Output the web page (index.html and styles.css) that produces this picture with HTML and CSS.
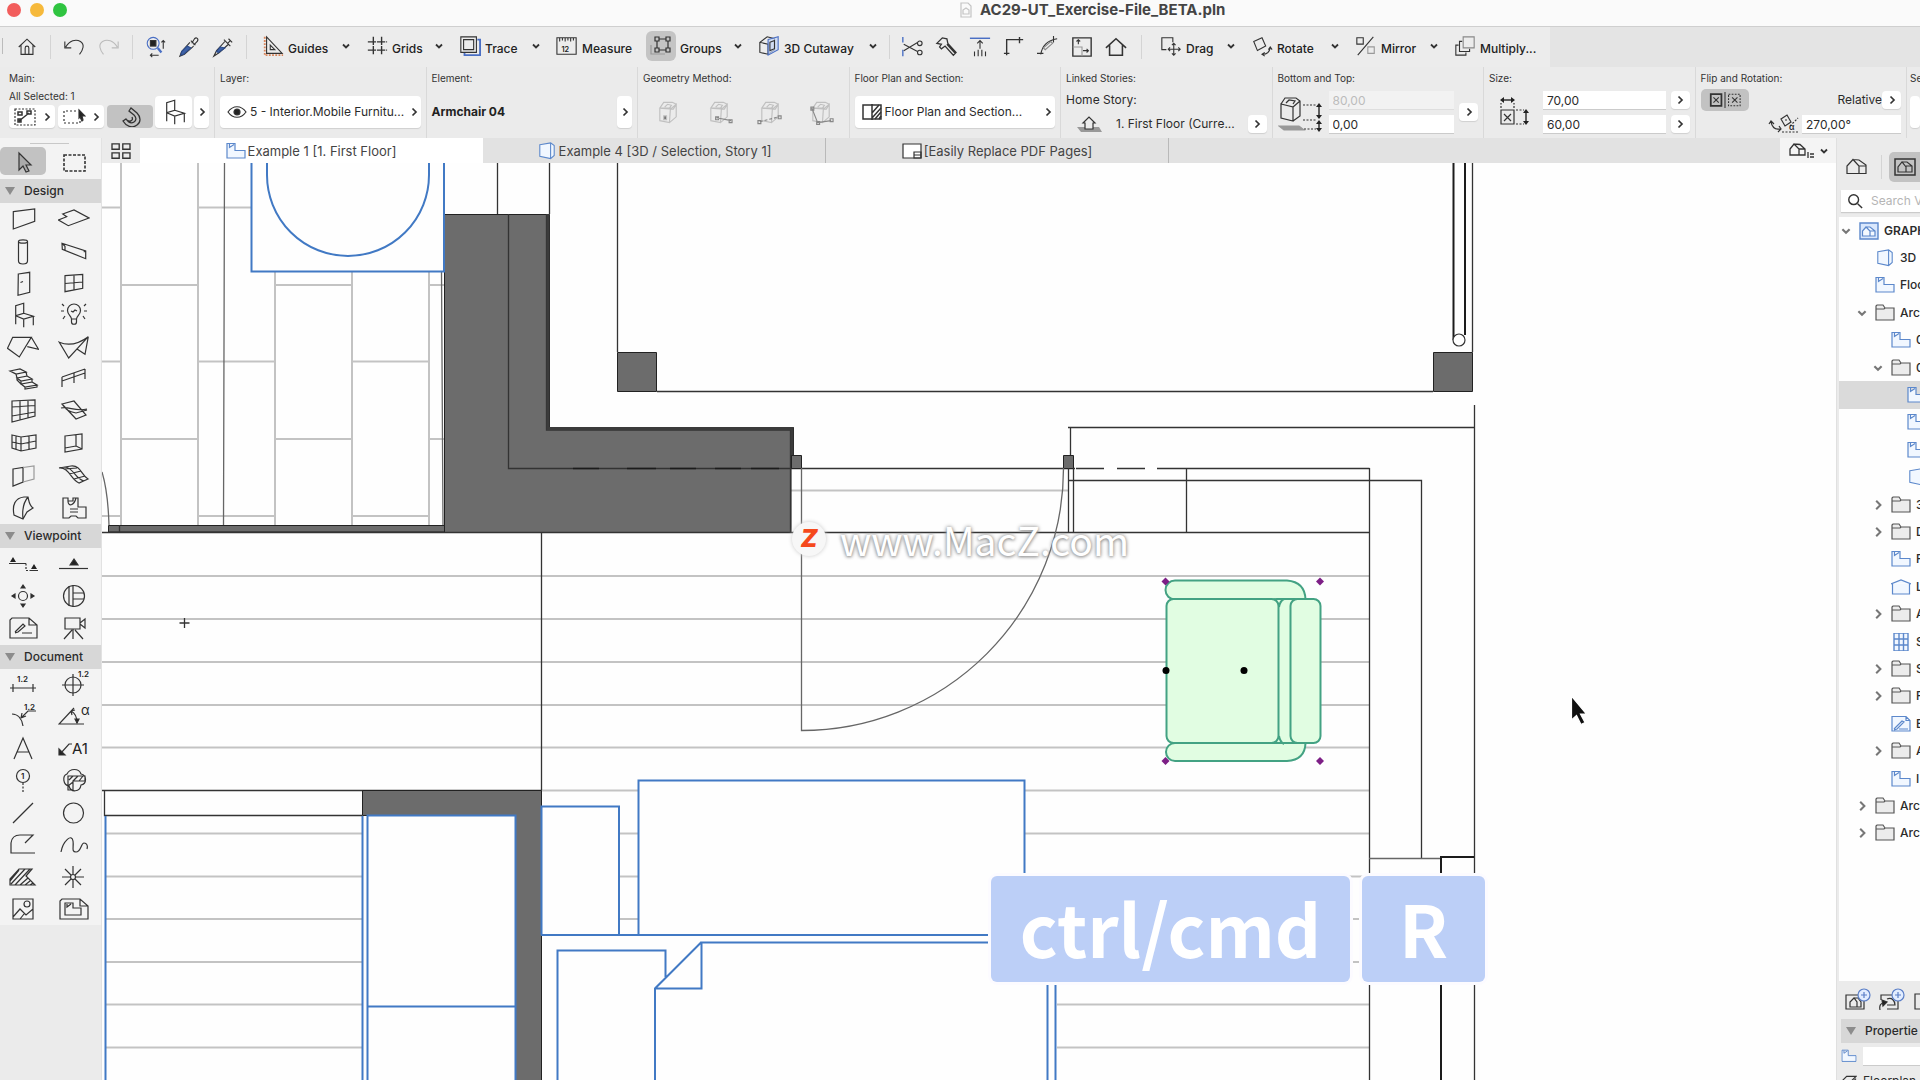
FILE: index.html
```html
<!DOCTYPE html>
<html lang="en">
<head>
<meta charset="utf-8">
<title>AC29-UT_Exercise-File_BETA.pln</title>
<link rel="stylesheet" href="styles.css">
</head>
<body>
<svg class="defs" aria-hidden="true">
  <symbol id="down" viewBox="0 0 10 10"><path d="M2 3.500l3 3 3-3" stroke-width="1.800"/></symbol>
  <symbol id="right" viewBox="0 0 10 10"><path d="M3.500 1.500L7 5 3.500 8.500" stroke-width="1.700"/></symbol>
  <symbol id="chair" viewBox="0 0 32 32"><path d="M8.700 25.300V6.700l8-2.400v10l-8 2.400zM16.700 14.300l9.600 3-9.600 2.700-8-3.300M16.700 20v8.300M26.300 17.300v9"/></symbol>
  <symbol id="plan" viewBox="0 0 20 18"><path d="M1 1.500h8v7h10v7.500H1zM3.500 2v3.500L8 2.500"/></symbol>
  <symbol id="box3d" viewBox="0 0 20 20"><path d="M2 3l12-2 4 3v11l-4 3.500L2 16zM14 1v17.500"/></symbol>
  <symbol id="folder" viewBox="0 0 20 18"><path d="M1 16V2l1-1h6l2 3h9v12zM1 5h8l1-1" /></symbol>
  <symbol id="house" viewBox="0 0 24 20"><path d="M2 16.500V9l6-6.500 6 6.500v7.500zM8 2.500l6 .5 7 5v8.500h-7M14 9h7M14 16v-5"/></symbol>
  <symbol id="home" viewBox="0 0 24 24"><path d="M3 12L12 3.500 21 12M5.500 10v10h13V10M10 20v-7a2 2 0 0 1 4 0v7"/></symbol>
  <symbol id="cube" viewBox="0 0 28 28"><path d="M5 10l4-6h9l4 2-3 5zM5 10v13l10 2 1-15zM16 11l6-5v13l-7 6M10 9l3-3 4 1-2 3"/></symbol>
</svg>

<header class="titlebar">
  <span class="light red"></span><span class="light amber"></span><span class="light green"></span>
  <h1><svg viewBox="0 0 12 16"><path d="M1 1h7l3 3v11H1zM3 12V8l3-2 3 2v4z" stroke="#c4c4c4"/></svg>AC29-UT_Exercise-File_BETA.pln</h1>
</header>

<nav class="toolbar" aria-label="Commands">
  <span class="grip"></span>
  <button aria-label="Home"><svg viewBox="0 0 24 24"><use href="#home"/></svg></button>
  <span class="sep"></span>
  <button aria-label="Undo"><svg viewBox="0 0 24 24"><path d="M2 6v7h7M3 12C7 5 14 3 19 6s3 9-1 14"/></svg></button>
  <button aria-label="Redo"><svg class="dim" viewBox="0 0 24 24"><path d="M22 6v7h-7M21 12C17 5 10 3 5 6s-3 9 1 14"/></svg></button>
  <span class="sep"></span>
  <button aria-label="Find and select"><svg viewBox="0 0 24 24"><circle cx="10" cy="8" r="6.500" stroke="#4a6fc4"/><rect x="7" y="5" width="6" height="6" fill="#222"/><path d="M15 13l4 5" stroke="#4a6fc4" stroke-width="2.500"/><path d="M21 14V5M19 7l2-2 2 2M16 21H7M9 19l-2 2 2 2"/></svg></button>
  <button aria-label="Pick up parameters"><svg viewBox="0 0 24 24"><path d="M14 5l5 5M15 8l3-5c2-2 5 0 3 3l-4 4M13 7l-9 10-2 5 5-2 10-9"/><path d="M10 11l4 2-8 7-3 1 1-4z" fill="#3f63a8" stroke="#2c4c8c"/></svg></button>
  <button aria-label="Inject parameters"><svg viewBox="0 0 24 24"><path d="M13 4l7 7M18 3l4 4M17 8l3-3M14 6L5 16l-3 6 6-4L18 9"/><path d="M9 12l5 1-7 5-2-1z" fill="#3f63a8" stroke="#2c4c8c"/></svg></button>
  <span class="sep"></span>
  <button class="tool"><svg viewBox="0 0 24 24"><path d="M3 2v20h20" stroke="#d9855a" stroke-width="2" stroke-dasharray="2 1.500"/><path d="M5 2v18h17zM9 11v5h5z"/></svg>Guides<svg class="chev"><use href="#down"/></svg></button>
  <button class="tool"><svg viewBox="0 0 24 24"><path d="M8 2v20M17 2v20M2 7.500h21M2 16.500h21" stroke-width="1.500" stroke-dasharray="9 1"/></svg>Grids<svg class="chev"><use href="#down"/></svg></button>
  <button class="tool"><svg viewBox="0 0 24 24"><path d="M6 6v16h17V5h-3" stroke="#4a6fc4" stroke-width="2"/><path d="M2 2h17v17H2zM5 5h11v11H5z" fill="#ececec"/></svg>Trace<svg class="chev"><use href="#down"/></svg></button>
  <button class="tool"><svg viewBox="0 0 24 24"><path d="M1 21V3h21v18zM4 3v4M7 3v3M10 3v4M13 3v3M16 3v4M19 3v3"/><text x="6" y="18" class="mini">12</text></svg>Measure</button>
  <button class="tool groups"><svg class="pressed" viewBox="0 0 30 30"><path d="M5 14v9h14" stroke="#999"/><path d="M11 8h11v11H11z"/><path d="M9 6h4v4H9zM20 6h4v4h-4zM9 17h4v4H9zM20 17h4v4h-4z" fill="#c4c4c4"/></svg>Groups<svg class="chev"><use href="#down"/></svg></button>
  <button class="tool"><svg viewBox="0 0 24 24"><path d="M2 8l8-6 8 2v12l-7 5-9-2zM2 8l9 2v11" /><path d="M11 5l11-3v14l-11 6z" fill="#c4d6f7" fill-opacity=".7" stroke="#4a6fc4"/><path d="M13 8l5-2v9l-5 2z"/></svg>3D Cutaway<svg class="chev"><use href="#down"/></svg></button>
  <span class="sep"></span>
  <button aria-label="Trim"><svg viewBox="0 0 24 24"><path d="M2 1v6M2 15v7" stroke="#4a6fc4" stroke-width="1.500"/><path d="M3 9l15 8M3 16l15-9"/><circle cx="20.500" cy="8" r="2.500"/><circle cx="20.500" cy="18" r="2.500"/></svg></button>
  <button aria-label="Split"><svg viewBox="0 0 24 24"><path d="M2 8l6-6 5 1 1 5 9 10-3 3-9-10-4 3-2-2 2-3zM13 9l9 10" stroke-width="1.400"/></svg></button>
  <button aria-label="Adjust"><svg viewBox="0 0 24 24"><path d="M1 2.500h22" stroke="#4a6fc4" stroke-width="1.600"/><path d="M12 14V5M9 8l3-3 3 3M6 22v-5M10 22v-7M14 22v-7M18 22v-5"/></svg></button>
  <button aria-label="Intersect"><svg viewBox="0 0 24 24"><path d="M4 21V4h18M18 1v7M1 19h6" stroke-width="1.500"/></svg></button>
  <button aria-label="Fillet"><svg viewBox="0 0 24 24"><path d="M4 20C6 10 11 5 22 3M18 0v7M0 19h7"/><path d="M7 13l8-7 2 2-8 7z" stroke="#888"/></svg></button>
  <button aria-label="Resize"><svg viewBox="0 0 24 24"><path d="M2 2h20v20H2z" stroke-width="1.500"/><path d="M8 9V4M6 6l2-2 2 2M13 16h6M17 14l2 2-2 2"/><path d="M2 12h10v10" stroke="#999"/></svg></button>
  <button aria-label="Elevation"><svg viewBox="0 0 24 24"><path d="M1 13L12 3l11 10M5 10v11h14V10" stroke-width="1.700"/></svg></button>
  <span class="sep"></span>
  <button class="tool"><svg viewBox="0 0 24 24"><path d="M7 16H2V3h12v5M15 9v13M9 15.500h13M13 11l2-2 2 2M13 20l2 2 2-2M11 13.500l-2 2 2 2M20 13.500l2 2-2 2"/></svg>Drag<svg class="chev"><use href="#down"/></svg></button>
  <button class="tool"><svg viewBox="0 0 24 24"><path d="M3 7l9-4 4 9-9 5zM13 21c4 0 7-2 8-7M19 16l2-3 2 3M15 19l-3 2 3 2"/></svg>Rotate<svg class="chev"><use href="#down"/></svg></button>
  <button class="tool"><svg viewBox="0 0 24 24"><path d="M2 3h7v7H2zM3 22L20 2"/><path d="M14 13h7v7h-7z" stroke="#999"/></svg>Mirror<svg class="chev"><use href="#down"/></svg></button>
  <button class="tool"><svg viewBox="0 0 24 24"><path d="M5 11H2v11h11v-3M9 7H6v11h11v-3"/><path d="M10 2h12v12H10z" stroke="#888"/></svg>Multiply...</button>
</nav>

<section class="infobar" aria-label="Info box">
  <div class="cell main">
    <h2>Main:</h2>
    <div class="picks">
      <div class="stack">
        <p class="small">All Selected: 1</p>
        <div class="row">
          <button class="card pick" aria-label="Selection set"><svg viewBox="0 0 24 20"><path d="M2 2h20v16H2z" stroke-dasharray="2 1.500"/><path d="M6 14l10-8M5 5h4v3H5zM14 4h4v3h-4zM5 12h3v3H5z" stroke-width="1.500"/></svg><svg class="chev"><use href="#right"/></svg></button>
          <button class="card pick" aria-label="Marquee set"><svg viewBox="0 0 24 20"><path d="M14 4H2v12h16v-4" stroke-dasharray="2 2"/><path d="M17 3l6 6h-3l1 4-1 1-2-4-1 1z" fill="#222"/></svg><svg class="chev"><use href="#right"/></svg></button>
          <button class="card pick on" aria-label="Magic"><svg viewBox="0 0 24 20"><path d="M5 14l3-2c2 3 5 5 8 3s2-5 0-7l-5-4 2-3 6 5c4 4 4 9 0 12-5 4-11 1-14-4zM8 12c2 3 8 3 6-2" stroke-width="1.300"/></svg></button>
        </div>
      </div>
      <button class="card chairbtn tall" aria-label="Object settings"><svg class="i32" viewBox="0 0 32 32"><use href="#chair"/></svg></button>
      <button class="card slim tall" aria-label="More"><svg class="chev"><use href="#right"/></svg></button>
    </div>
  </div>
  <div class="cell">
    <h2>Layer:</h2>
    <button class="card wide"><svg viewBox="0 0 20 16"><path d="M1 8c5-7 13-7 18 0-5 7-13 7-18 0z"/><circle cx="10" cy="8" r="3" fill="#222"/></svg>5 - Interior.Mobile Furnitu...<svg class="chev"><use href="#right"/></svg></button>
  </div>
  <div class="cell">
    <h2>Element:</h2>
    <div class="row element"><strong>Armchair 04</strong><button class="card slim tall" aria-label="Choose element"><svg class="chev"><use href="#right"/></svg></button></div>
  </div>
  <div class="cell">
    <h2>Geometry Method:</h2>
    <div class="methods">
      <button aria-label="Method 1"><svg viewBox="0 0 28 28"><use href="#cube"/><rect x="9" y="18" width="3" height="4" fill="#777"/></svg></button>
      <button aria-label="Method 2"><svg viewBox="0 0 28 28"><use href="#cube"/><path d="M11 20l15 3M10 19h3v3h-3zM24 22h3v3h-3z" stroke="#888"/></svg></button>
      <button aria-label="Method 3"><svg viewBox="0 0 28 28"><use href="#cube"/><path d="M3 24l20-5" stroke="#888" stroke-dasharray="3 2"/><path d="M1 23h3v3H1zM22 18h3v3h-3z" stroke="#888"/></svg></button>
      <button aria-label="Method 4"><svg viewBox="0 0 28 28"><use href="#cube"/><path d="M4 10l6 15 14-2M3 9h3v3H3zM9 24h3v3H9zM23 21h3v3h-3z" stroke="#888"/></svg></button>
    </div>
  </div>
  <div class="cell">
    <h2>Floor Plan and Section:</h2>
    <button class="card wide"><svg viewBox="0 0 20 16"><path d="M1 1h18v14H1z" stroke-width="1.500"/><path d="M10 0v16M10 9l7-8M10 14l9-10M13 15l6-7M17 15l2-3" stroke-width="1.500"/></svg>Floor Plan and Section...<svg class="chev"><use href="#right"/></svg></button>
  </div>
  <div class="cell">
    <h2>Linked Stories:</h2>
    <div class="pair">
      <p>Home Story:</p>
      <div class="row story"><svg class="i28" viewBox="0 0 28 20"><path d="M2 13h22l3 5H6z" fill="#999" stroke="none"/><path d="M8 9l6-6 6 6h-2v6h-8V9z" fill="#ececec"/></svg><span>1. First Floor (Curre...</span><button class="card nub" aria-label="Home story"><svg class="chev"><use href="#right"/></svg></button></div>
    </div>
  </div>
  <div class="cell">
    <h2>Bottom and Top:</h2>
    <div class="row dims bt">
      <svg class="i46" viewBox="0 0 46 40"><path d="M3 12l12 3v14L3 26zM3 12l4-6h11l4 3v15l-7 5M15 15l7-6M8 11l3-3 6 1-2 3"/><path d="M1 34h20l5 4H6z" fill="#999" stroke="#999"/><path d="M25 13h14M25 28h14M26 37h12" stroke-dasharray="2 1.500"/><path d="M41 14v12M41 30v7" stroke-width="1.500"/><path d="M41 11l3 4h-6zM41 27l3-4h-6zM41 28l3 4h-6zM41 40l3-4h-6z" fill="#222" stroke="none"/></svg>
      <div class="pair"><input type="text" value="80,00" aria-label="Top" disabled><input type="text" value="0,00" aria-label="Bottom"></div>
      <button class="card nub" aria-label="Anchor"><svg class="chev"><use href="#right"/></svg></button>
    </div>
  </div>
  <div class="cell">
    <h2>Size:</h2>
    <div class="row dims size">
      <svg class="i32" viewBox="0 0 32 32"><path d="M3 14h13v14H3zM6 18l7 7M13 18l-7 7"/><path d="M3 12V7M16 12V7M18 14h8M18 28h8" stroke-dasharray="2 1.500"/><path d="M4 4h11M28 16v10" stroke-width="1.500"/><path d="M2 4l4-3v6zM17 4l-4-3v6zM28 13l3 4h-6zM28 29l3-4h-6z" fill="#222" stroke="none"/></svg>
      <div class="pair"><input type="text" value="70,00" aria-label="Width"><input type="text" value="60,00" aria-label="Depth"></div>
      <div class="pair"><button class="card nub" aria-label="Width options"><svg class="chev"><use href="#right"/></svg></button><button class="card nub" aria-label="Depth options"><svg class="chev"><use href="#right"/></svg></button></div>
    </div>
  </div>
  <div class="cell">
    <h2>Flip and Rotation:</h2>
    <div class="pair">
      <div class="row flip"><button class="toggle" aria-label="Flip"><svg viewBox="0 0 40 18"><path d="M4 2.500h12v13H4z" stroke-width="2"/><path d="M7 6l6 6M13 6l-6 6M20 0v18"/><path d="M24 2.500h13v13H24z" stroke-dasharray="2 1.500"/><path d="M28 6l6 6M34 6l-6 6"/></svg></button><span class="end">Relative</span><button class="card nub" aria-label="Relative options"><svg class="chev"><use href="#right"/></svg></button></div>
      <div class="row angle"><svg class="i32" viewBox="0 0 32 20"><path d="M13 5l6-4 4 7-6 4zM17 6h2M3 8c1 5 4 8 9 7M1 10l2-3 3 3M11 12l2 3-3 3"/><path d="M14 18h16M22 12l8-8" stroke-dasharray="2 1.500"/><text x="21" y="16" class="mini">α</text></svg><input type="text" value="270,00°" aria-label="Angle"></div>
    </div>
  </div>
  <div class="cell last">
    <h2>Se</h2>
    <button class="card wide" aria-label="Settings"></button>
  </div>
</section>

<main class="workspace">
  <aside class="toolbox">
    <div class="palette">
      <span class="drag"></span>
      <div class="tools pair-top">
        <button class="on" aria-label="Arrow"><svg viewBox="0 0 32 32"><path d="M12 6v17l4-4 3 6 3-1-3-6h5z" fill="#aaa"/></svg></button>
        <button aria-label="Marquee"><svg viewBox="0 0 32 32"><path d="M6 8h21v16H6z" stroke-width="1.600" stroke-dasharray="3 1.500"/></svg></button>
      </div>
      <h3>Design</h3>
      <div class="tools">
        <button aria-label="Wall"><svg viewBox="0 0 32 32"><path d="M6.300 8.700L27.700 6v12.300L6.300 26z"/></svg></button>
        <button aria-label="Slab"><svg viewBox="0 0 32 32"><path d="M4.700 11L16 7l15 8-20.700 7.700L.5 17l8.200-3.300z"/></svg></button>
        <button aria-label="Column"><svg viewBox="0 0 32 32"><ellipse cx="16" cy="6.500" rx="4.500" ry="1.700"/><path d="M11.500 6.500V26c0 4 9 4 9 0V6.500"/></svg></button>
        <button aria-label="Beam"><svg viewBox="0 0 32 32"><path d="M4 8.300L27.700 16v7.700L4.300 14.300zM4 8.300l3 3v4M27.700 16l-2 1"/></svg></button>
        <button aria-label="Door"><svg viewBox="0 0 32 32"><path d="M11.300 7l11.400-1.700v20L11 28.300zM13.500 15.500l2.500-1"/></svg></button>
        <button aria-label="Window"><svg viewBox="0 0 32 32"><path d="M7 8.700l17.700-1.400v14L7 24.700zM16 8v15M7 16.500l17.700-1.500"/></svg></button>
        <button aria-label="Object"><svg viewBox="0 0 32 32"><use href="#chair"/></svg></button>
        <button aria-label="Lamp"><svg viewBox="0 0 32 32"><path d="M13.500 20c0-3-4-4-4-8.500a6.500 6.500 0 0 1 13 0C22.500 16 18.500 17 18.500 20v3c0 3-5 3-5 0zM13.500 20h5M13 12l2 1 2-2 2 1M6 7L4 5M26 7l2-2M6 12H3M29 12h-3M7 17l-2 3M25 17l2 3"/></svg></button>
        <button aria-label="Roof"><svg viewBox="0 0 32 32"><path d="M5.700 6.300h18.600L12.300 26 .5 17.300zM24.300 6.300l7.200 12-11.200-2.600"/></svg></button>
        <button aria-label="Shell"><svg viewBox="0 0 32 32"><path d="M1.300 11.300Q15 17 30.300 5.700L10.700 27zM30.300 5.700L27 23.300 19 18"/></svg></button>
        <button aria-label="Stair"><svg viewBox="0 0 32 32"><path d="M3 8l10-2 6 3-10 2zM3 8l6 3 1 4M19 9l1 4-10 2 4 3 11-2-5-3M14 18v3l11-2v-3M14 21l4 3 12-2-5-3M18 24v2l12-2v-2M10 15v2l4 4"/></svg></button>
        <button aria-label="Railing"><svg viewBox="0 0 32 32"><path d="M4 14l23-8M4 18l23-8M4 14v10M16 10v10M27 6v10"/></svg></button>
        <button aria-label="Curtain wall"><svg viewBox="0 0 32 32"><path d="M5 6l23-1v16L5 27zM13 5.500V25M21 5.500V23M5 12l23-1.500M5 21l23-4"/></svg></button>
        <button aria-label="Beam system"><svg viewBox="0 0 32 32"><path d="M4 9l12-3 12 14-10 4zM3 13c8-2 14 4 26 1M4 9c4 4 3 7 14 9l11-3"/></svg></button>
        <button aria-label="Facade"><svg viewBox="0 0 32 32"><path d="M5 8l9 2 15-2v13l-15 3-9-3zM14 10v14M22 9v13M9 9v14M5 15l9 2 15-3"/></svg></button>
        <button aria-label="Opening"><svg viewBox="0 0 32 32"><path d="M7 9l17-2v15L7 25zM18 8v11l6 3M18 19L7 21"/></svg></button>
        <button aria-label="Zone wall"><svg viewBox="0 0 32 32"><path d="M6 10l10-1.500V23L6 27z"/><path d="M16 8.500L27 7v13l-11 3" stroke="#999"/></svg></button>
        <button aria-label="Mesh"><svg viewBox="0 0 32 32"><path d="M1 9c10-1 12 12 20 15l9-4C23 16 23 6 13 7zM7 8c8 0 10 12 19 14M6 10l13-1M11 15l12-3M16 20l11-3"/></svg></button>
        <button aria-label="Morph"><svg viewBox="0 0 32 32"><path d="M17 6C8 7 5 14 7 24l9 4 4-7 6-4c-4-3-4-7-5-11zM21 6c-5 6-6 13-5 22"/></svg></button>
        <button aria-label="Zone"><svg viewBox="0 0 32 32"><path d="M5 7h5v3h5V7h5v9h8v11h-8l-2-2h-5l-2 2H5zM10 10c0 6 6 5 8-3M12 18h8M12 21h8"/></svg></button>
      </div>
      <h3>Viewpoint</h3>
      <div class="tools">
        <button aria-label="Section"><svg viewBox="0 0 32 32"><path d="M2 15.500h17M24 22.500h7"/><path d="M19 15.500v7h5" stroke-dasharray="2 1.500"/><path d="M3 14l3-5 3 5zM24 21l3-5 3 5z" fill="#222" stroke="none"/></svg></button>
        <button aria-label="Elevation view"><svg viewBox="0 0 32 32"><path d="M1 20.500h29"/><path d="M12 17l4-6 4 6z" fill="#222"/></svg></button>
        <button aria-label="Interior elevation"><svg viewBox="0 0 32 32"><circle cx="16" cy="16" r="4.500"/><path d="M14 8l2-3 2 3zM14 24l2 3 2-3zM8 14l-3 2 3 2zM24 14l3 2-3 2z" fill="#222"/></svg></button>
        <button aria-label="Detail"><svg viewBox="0 0 32 32"><circle cx="16" cy="16" r="10.500"/><path d="M11 6v20M15 5v22M15 13h11M15 19h11"/></svg></button>
        <button aria-label="Worksheet"><svg viewBox="0 0 32 32"><path d="M5 6h17l8 7v13H3V8zM22 6v7h8M8 20l8-8 2 2-7 6-3 1M15 21h10"/></svg></button>
        <button aria-label="Camera"><svg viewBox="0 0 32 32"><path d="M7 6h15v11H7zM22 11l5-4v9l-5-4M15 17v10M14 18l-8 9M17 18l8 9"/></svg></button>
      </div>
      <h3>Document</h3>
      <div class="tools">
        <button aria-label="Dimension"><svg viewBox="0 0 32 32"><path d="M3 19h26M6 15v8M26 15v8"/><text x="10" y="13" class="mini">1.2</text></svg></button>
        <button aria-label="Level dimension"><svg viewBox="0 0 32 32"><circle cx="15" cy="16" r="8"/><path d="M15 5v22M4 16h22"/><text x="20" y="8" class="mini">1.2</text></svg></button>
        <button aria-label="Radial dimension"><svg viewBox="0 0 32 32"><path d="M5 13c6 0 10 5 11 12M14 17l7-7h8M14 17l1-5M14 17l5-2"/><text x="17" y="9" class="mini">1.2</text></svg></button>
        <button aria-label="Angle dimension"><svg viewBox="0 0 32 32"><path d="M16 7L1 23h25M13 10c4 2 6 6 6 12M13 10l4-1M13 10l1 4"/><path d="M17 18h4l-2 4z" fill="#222"/><text x="23" y="14" class="alpha">α</text></svg></button>
        <button aria-label="Text"><svg viewBox="0 0 32 32"><path d="M7 26l9-21 9 21M10 19h12"/></svg></button>
        <button aria-label="Label"><svg viewBox="0 0 32 32"><path d="M3 20l8-9h3"/><path d="M1 16v6h6z" fill="#222"/><text x="14" y="21" class="label">A1</text></svg></button>
        <button aria-label="Grid element"><svg viewBox="0 0 32 32"><circle cx="16" cy="11" r="6.500"/><path d="M16 18v10" stroke-dasharray="2 1.500"/><text x="14" y="14" class="mini">1</text></svg></button>
        <button aria-label="Change"><svg viewBox="0 0 32 32"><path d="M9 9c3-6 12-6 14 0 6 1 6 10 0 11-1 7-10 8-12 1-6-1-7-10-2-12zM10 11h17v5H15v9h-5zM11 15l4-4M15 16l5-5M21 16l4-5M10 21l5-4"/></svg></button>
        <button aria-label="Line"><svg viewBox="0 0 32 32"><path d="M6 26L26 6"/></svg></button>
        <button aria-label="Circle"><svg viewBox="0 0 32 32"><circle cx="15.500" cy="16" r="10"/></svg></button>
        <button aria-label="Polyline"><svg viewBox="0 0 32 32"><path d="M28 24H4V14q1-8 9-8h13l-8 8"/></svg></button>
        <button aria-label="Spline"><svg viewBox="0 0 32 32"><path d="M3 23C5 12 14 4 15 12c1 6-2 11 3 11s5-9 8-9 4 3 3 6"/></svg></button>
        <button aria-label="Fill"><svg viewBox="0 0 32 32"><path d="M3 24v-6l9-10h13l-6 7 9 9zM4 23L18 8M8 24L23 8M13 24l8-7M18 24l5-4M23 24l3-2M3 20l9-11"/></svg></button>
        <button aria-label="Hotspot"><svg viewBox="0 0 32 32"><circle cx="15" cy="16" r="2.500"/><path d="M15 5v8M15 19v8M4 16h8M18 16h8M7 8l6 6M17 18l6 6M23 8l-6 6M13 18l-6 6"/></svg></button>
        <button aria-label="Figure"><svg viewBox="0 0 32 32"><path d="M6 6h20v20H6zM6 24l7-8 6 6 7-6M13 26l4-5"/><circle cx="20" cy="11" r="3"/></svg></button>
        <button aria-label="Drawing"><svg viewBox="0 0 32 32"><path d="M4 6h18l8 7v13H2V8zM22 6v7h8M7 10h8v5h8v7H7zM9 11v3l4-3"/></svg></button>
      </div>
    </div>
  </aside>

  <section class="center">
    <nav class="tabs" aria-label="Open views">
      <button class="all" aria-label="Tab overview"><svg viewBox="0 0 24 20"><path d="M2 2h8v6H2zM14 2h8v6h-8zM2 12h8v6H2zM14 12h8v6h-8z" stroke-width="1.500"/></svg></button>
      <button class="tab current"><svg class="blue" viewBox="0 0 20 18"><use href="#plan"/></svg>Example 1 [1. First Floor]</button>
      <button class="tab"><svg class="blue" viewBox="0 0 20 20"><use href="#box3d"/></svg>Example 4 [3D / Selection, Story 1]</button>
      <button class="tab"><svg viewBox="0 0 20 18"><path d="M1 2h18v14H1z" fill="#fff"/><path d="M12 10h7v6h-7zM12 13h7"/></svg>[Easily Replace PDF Pages]</button>
      <button class="views" aria-label="Views"><svg viewBox="0 0 26 20"><path d="M2 14V8l4-5 5 5v6zM6 3l6 .500 5 4.500v6h-6M11 8h6M20 11v6M22 13h4M22 16h4" stroke-width="1.300"/></svg><svg class="chev"><use href="#down"/></svg></button>
    </nav>
    <div class="canvas">
      <svg class="drawing" viewBox="102 163 1734 917" preserveAspectRatio="xMinYMin slice" role="img" aria-label="First floor plan">
        <!-- tiles and floor boards -->
        <path class="board" d="M121 163V525M198 163V525M102 207.500h19M198 207.500h53M121 285h77M275 285h77M429 285h15M102 361.500h19M198 361.500h77M352 361.500h77M121 439h77M275 439h77M429 439h15M102 516h19M198 516h77M352 516h77M275 271V525M352 271V525M429 271V525"/>
        <path class="board" d="M102 576H1369M102 619H1369M102 662H1369M102 705H1369M102 747.500H1369M541 790.500H638M1025 790.500H1369M106 833.500H362M619 833.500H638M1025 833.500H1369M106 876.500H362M619 876.500H638M1025 876.500H1369M106 919H362M619 919H638M1025 919H1369M106 962H362M1057 962H1369M106 1004.500H362M1057 1004.500H1369M106 1047.500H362M1057 1047.500H1369M791 490.500H1068"/>
        <path class="ink soft" d="M224.500 163L223.500 525M441.500 271L443 525M102 472Q108 492 109 525"/>
        <!-- walls -->
        <path class="wall" d="M444.500 214.500H549.500V427.500H793.500V455.500H791V532.500H444.500z"/>
        <path class="ink" d="M508.500 214V468.500H1369.500M546.500 214V430H790.500V532"/>
        <path d="M548 214V428.500H792V455" fill="none" stroke="#3b3b3b" stroke-width="3"/>
        <path d="M573 468.500h26M627 468.500h29M670 468.500h26M715 468.500h26M751 468.500h28" stroke="#1c1c1c" stroke-width="1.500"/>
        <path d="M1075 468.500H1157" stroke="#fff" stroke-width="3"/>
        <path class="ink" d="M1076 468.500h28M1117 468.500h28"/>
        <path class="wall" d="M108.500 525.500H444.500V532H108.500zM791.500 455.500h10v13h-10zM1063.500 455.500h10v13h-10zM617.500 352.500h39v39h-39zM1433.500 352.500h39v39h-39z"/>
        <path class="ink" d="M119.500 525v7M102 532.500H1369M102 790.500H541.500M104.500 790V815.500H362"/>
        <path class="wall" d="M362.500 790.500H541.500V1082H515.500V815.500H362.500z"/>
        <path class="ink" d="M497.500 163V214M549.500 163V214M617.500 163V352M657 391.500H1433M1472.500 163V352M1474.500 405V1080M1068 427.500H1474M1070.500 427V455M1068.500 468V532M1073.500 468V532M1068 480.500H1421.500V858M1186.500 468V532M1369.500 468V1080M541.500 532V790"/>
        <path class="ink soft" d="M1369 858.500H1441M801.500 468V730.500A262 262 0 0 0 1063.500 468"/>
        <path d="M1474 857H1441V1080M1453.500 163V340M1465 163V335" fill="none" stroke="#1c1c1c" stroke-width="2"/>
        <circle cx="1459" cy="340" r="6" fill="#fff" stroke="#333"/>
        <path class="ink" d="M184.500 618v10M179.500 623h10"/>
        <!-- furniture -->
        <path class="blueline" fill="#fefefe" d="M251.500 160V271.500H444V160"/>
        <path class="blueline" fill="none" d="M267 160V175A81 81 0 0 0 429 175V160"/>
        <path class="blueline" fill="none" d="M105.500 816V1080M362.500 816V1080M367.500 1080V815.500H515.500V1080M367 1006.500H515"/>
        <path class="blueline" fill="#fefefe" d="M541.500 935V806.500H619V935M638.500 935V780.500H1024.500V935"/>
        <path class="blueline" fill="none" d="M541 935H1055.500V1082M701 942.500H1047.500V1082M557.500 1082V950.500H665.500V977M701.500 942L655 988.500V1082M655 988.500H701.500V942"/>
        <!-- selected armchair -->
        <g class="armchair">
          <path d="M1175 580.500H1287Q1305 582 1305.500 599.500H1175a8 8 0 0 1 0-19zM1175 743H1305.500Q1305 760 1287 761H1175a8 8 0 0 1 0-18z"/>
          <rect x="1270" y="599" width="32" height="144" rx="7"/>
          <rect x="1166.500" y="599" width="112" height="144" rx="7"/>
          <path d="M1279 607q1-6 5-8M1279 736q1 6 5 8"/>
          <rect x="1290.500" y="599" width="30" height="144" rx="7"/>
        </g>
        <path class="handle" d="M1165.500 577.500l4 4-4 4-4-4zM1320 577.500l4 4-4 4-4-4zM1165.500 757l4 4-4 4-4-4zM1320 757l4 4-4 4-4-4z"/>
        <circle class="dot" cx="1166" cy="670.500" r="3.500"/><circle class="dot" cx="1244" cy="670.500" r="3.500"/>
        <path d="M1571.500 696V720l5-4.500 4.500 9 4-2-4.500-8.500h6z" fill="#111" stroke="#fff" stroke-width="1.200"/>
      </svg>
      <p class="watermark"><span class="badge">Z</span>www.MacZ.com</p>
      <div class="keys"><kbd>ctrl/cmd</kbd><kbd class="single">R</kbd></div>
    </div>
  </section>

  <aside class="navigator">
    <div class="modes">
      <button aria-label="Project map"><svg viewBox="0 0 24 20"><use href="#house"/></svg></button>
      <span class="sep"></span>
      <button class="on" aria-label="View map"><svg viewBox="0 0 24 20"><path d="M2 2h20v16H2z" stroke-width="1.500"/><path d="M5 15v-5l4-5 4 5v5zM9 5h5l5 4v6h-6M13 9h6"/></svg></button>
    </div>
    <label class="search"><svg viewBox="0 0 18 18"><circle cx="7.500" cy="7.500" r="5.500" stroke-width="1.600"/><path d="M12 12l5 5" stroke-width="1.600"/></svg><input type="text" placeholder="Search V" aria-label="Search"></label>
    <ul class="tree">
      <li><svg class="chev"><use href="#down"/></svg><svg class="blue" viewBox="0 0 20 18"><path d="M1 1h18v16H1z" fill="#d9e7fc" stroke-width="1.400"/><path d="M3.500 14V9l3.500-4 4 4v5zM7 5h4l5 4v5h-5M11 9h5" fill="#f4f9ff"/></svg><b>GRAPH</b></li>
      <li class="l1"><svg class="blue" viewBox="0 0 20 20"><use href="#box3d"/></svg>3D</li>
      <li class="l1"><svg class="blue" viewBox="0 0 20 18"><use href="#plan"/></svg>Floo</li>
      <li class="l1"><svg class="chev"><use href="#down"/></svg><svg class="folder" viewBox="0 0 20 18"><use href="#folder"/></svg>Arc</li>
      <li class="l2"><svg class="blue" viewBox="0 0 20 18"><use href="#plan"/></svg>0</li>
      <li class="l2"><svg class="chev"><use href="#down"/></svg><svg class="folder" viewBox="0 0 20 18"><use href="#folder"/></svg>0</li>
      <li class="l3 picked"><svg class="blue" viewBox="0 0 20 18"><use href="#plan"/></svg></li>
      <li class="l3"><svg class="blue" viewBox="0 0 20 18"><use href="#plan"/></svg></li>
      <li class="l3"><svg class="blue" viewBox="0 0 20 18"><use href="#plan"/></svg></li>
      <li class="l3"><svg class="blue" viewBox="0 0 20 20"><use href="#box3d"/></svg></li>
      <li class="l2"><svg class="chev"><use href="#right"/></svg><svg class="folder" viewBox="0 0 20 18"><use href="#folder"/></svg>3</li>
      <li class="l2"><svg class="chev"><use href="#right"/></svg><svg class="folder" viewBox="0 0 20 18"><use href="#folder"/></svg>D</li>
      <li class="l2"><svg class="blue" viewBox="0 0 20 18"><use href="#plan"/></svg>F</li>
      <li class="l2"><svg class="blue" viewBox="0 0 20 18"><path d="M0 6l10-4 10 4M1.500 5.500V16h17V5.500"/></svg>L</li>
      <li class="l2"><svg class="chev"><use href="#right"/></svg><svg class="folder" viewBox="0 0 20 18"><use href="#folder"/></svg>A</li>
      <li class="l2"><svg class="blue" viewBox="0 0 20 18"><path d="M3 0h14v18H3zM8 0v18M12.500 0v18M3 6h14M3 12h14" stroke-width="1.400"/></svg>S</li>
      <li class="l2"><svg class="chev"><use href="#right"/></svg><svg class="folder" viewBox="0 0 20 18"><use href="#folder"/></svg>S</li>
      <li class="l2"><svg class="chev"><use href="#right"/></svg><svg class="folder" viewBox="0 0 20 18"><use href="#folder"/></svg>F</li>
      <li class="l2"><svg class="blue" viewBox="0 0 20 18"><path d="M1 1.500h14l4 4V16H1zM15 1.500v4h4M3 14l8-8 2 1-7 7-3 1M8 14h9"/></svg>E</li>
      <li class="l2"><svg class="chev"><use href="#right"/></svg><svg class="folder" viewBox="0 0 20 18"><use href="#folder"/></svg>A</li>
      <li class="l2"><svg class="blue" viewBox="0 0 20 18"><use href="#plan"/></svg>I</li>
      <li class="l1"><svg class="chev"><use href="#right"/></svg><svg class="folder" viewBox="0 0 20 18"><use href="#folder"/></svg>Arc</li>
      <li class="l1"><svg class="chev"><use href="#right"/></svg><svg class="folder" viewBox="0 0 20 18"><use href="#folder"/></svg>Arc</li>
    </ul>
    <div class="actions">
      <button aria-label="Save view"><svg viewBox="0 0 26 24"><path d="M1 7h18v14H1zM5 19v-5l4-4 3 4v5zM9 10h4l3 4v5h-4"/><circle cx="19" cy="7" r="6" fill="#e2edff" stroke="#5b7fc7"/><path d="M16 7h6M19 4v6" stroke="#5b7fc7"/></svg></button>
      <button aria-label="Clone folder"><svg viewBox="0 0 26 24"><path d="M2 12V7h17v14H8M8 11c5-2 8 2 8 6H8M1 22c-1-5 1-7 4-7"/><path d="M3 12l5 2-4 4z" fill="#222"/><circle cx="19" cy="7" r="6" fill="#e2edff" stroke="#5b7fc7"/><path d="M16 7h6M19 4v6" stroke="#5b7fc7"/></svg></button>
      <button aria-label="New folder"><svg viewBox="0 0 26 24"><path d="M2 21V6h7l2 3h12v12z"/></svg></button>
    </div>
    <h3>Propertie</h3>
    <div class="prop"><svg class="blue" viewBox="0 0 20 18"><use href="#plan"/></svg><input type="text" aria-label="View ID"></div>
    <div class="prop"><svg viewBox="0 0 20 18"><path d="M1 9l6-6h12l-6 6zM1 12l12 0 6-6" stroke-width="1.500"/></svg>Floorplan</div>
  </aside>
</main>
</body>
</html>
```
FILE: styles.css
```css
* { box-sizing: border-box; }

body {
  margin: 0;
  height: 100vh;
  display: flex;
  flex-direction: column;
  overflow: hidden;
  background: #ebebeb;
  color: #2b2b2b;
  font: 12px/16px Inter, "Noto Sans", sans-serif;
}

h1, h2, h3, p, ul { margin: 0; padding: 0; }
button { margin: 0; padding: 0; border: 0; background: none; color: inherit; font: inherit; }
input { min-width: 0; border: 0; color: inherit; font: inherit; }
svg { flex: none; fill: none; stroke: #333; stroke-width: 1.2; }
svg text { stroke: none; fill: #222; }
.mini { font-size: 8px; font-weight: 600; }
.alpha { font-size: 13px; }
.label { font-size: 15px; }
.defs { position: absolute; width: 0; height: 0; }
.chev { width: 10px; height: 10px; }
.blue { stroke: #5c88cb; fill: #f1f7ff; }
.folder { stroke: #555; fill: #ececec; }
.row { display: flex; align-items: center; }
.i28 { width: 28px; height: 20px; }
.i32 { width: 32px; height: 32px; }
.i46 { width: 46px; height: 40px; }

/* Title bar */
.titlebar {
  flex: none;
  height: 27px;
  padding: 0 0 6px 7px;
  display: flex;
  align-items: center;
  gap: 9px;
  background: #fafafa;
  border-bottom: 1px solid #cfcfcf;
}
.light { width: 14px; height: 14px; border-radius: 50%; }
.red { background: #f25d5c; }
.amber { background: #f6b93b; }
.green { background: #2fc440; }
.titlebar h1 {
  margin-left: 884px;
  display: flex;
  align-items: center;
  gap: 8px;
  font-size: 15px;
  font-weight: 700;
  white-space: nowrap;
  color: #444;
}
.titlebar h1 svg { width: 12px; height: 16px; }

/* Command toolbar */
.toolbar {
  flex: none;
  height: 40px;
  display: grid;
  grid-template-columns: 9px 35px 12px 35px 35px 12px repeat(3, 34px) 12px 104px 93px 97px 90px 112px 135px 12px repeat(7, 34px) 17px 91px 104px 99px 106px;
  background: linear-gradient(90deg, #ececec 1550px, #e4e4e4 1550px);
}
.toolbar > button { display: flex; align-items: center; justify-content: center; }
.toolbar svg { width: 22px; height: 22px; }
.toolbar .dim { stroke: #bbb; }
.toolbar .tool { justify-content: flex-start; gap: 4px; padding: 4px 5px 0 10px; font-weight: 500; color: #222; white-space: nowrap; }
.toolbar .tool svg { margin-bottom: 6px; }
.toolbar .tool .chev { width: 10px; height: 10px; margin-left: auto; }
.toolbar .tool .pressed { width: 30px; height: 30px; border-radius: 6px; background: #c4c4c4; }
.grip { width: 1px; height: 16px; margin: 11px 0 0 2px; background: #bbb; }
.sep { justify-self: center; align-self: center; width: 1px; height: 24px; background: #d4d4d4; }

/* Info box */
.infobar {
  flex: none;
  height: 71px;
  display: grid;
  grid-template-columns: 215px repeat(8, 1fr) 13px;
  overflow: hidden;
}
.cell { min-width: 0; padding: 4px 5px 0; border-right: 1px solid #d9d9d9; overflow: hidden; }
.cell.main { padding-left: 9px; }
.cell.last { border: 0; padding: 4px 0 0 3px; white-space: nowrap; }
.cell h2, .small { font-size: 10px; line-height: 14px; font-weight: 400; color: #333; white-space: nowrap; }
.card {
  display: flex;
  align-items: center;
  justify-content: center;
  height: 23px;
  background: #fff;
  border-radius: 4px;
  box-shadow: 0 1px 1px #d0d0d0;
  white-space: nowrap;
}
.tall { height: 32px; }
.slim { width: 15px; }
.nub { width: 19px; height: 18px; }
.wide { width: 100%; height: 32px; margin-top: 11px; padding: 0 2px 0 7px; justify-content: flex-start; gap: 3px; }
.wide svg { width: 20px; height: 16px; }
.wide .chev { width: 10px; height: 10px; margin-left: auto; }
.picks { display: flex; align-items: flex-end; gap: 2px; height: 43px; }
.picks .row { gap: 3px; }
.picks .small { line-height: 16px; margin-bottom: 1px; }
.pick { width: 46px; gap: 5px; }
.pick svg { width: 24px; height: 20px; }
.pick .chev { width: 10px; height: 10px; }
.pick.on { background: #c2c2c2; box-shadow: none; }
.chairbtn { width: 38px; }
.element { height: 32px; margin-top: 11px; justify-content: space-between; }
.element strong { font-weight: 700; color: #222; }
.methods { display: flex; gap: 24px; margin: 13px 0 0 12px; }
.methods svg { display: block; width: 27px; height: 28px; stroke: #c0c0c0; }
.pair { display: flex; flex-direction: column; gap: 6px; }
.cell > .pair, .dims { margin-top: 6px; }
.pair p { line-height: 18px; }
.pair .row { height: 18px; }
.story { gap: 13px; padding-left: 9px; white-space: nowrap; }
.story span { flex: 1; min-width: 0; }
.story .nub { margin-left: -10px; }
.dims { gap: 5px; }
.dims .pair { flex: 1; }
.dims .pair + .pair { flex: none; }
.dims input, .angle input { width: 100%; height: 18px; padding: 0 4px; background: #fff; box-shadow: 0 1px 0 #cbcbcb; }
.dims input:disabled { background: #f2f2f2; color: #bcbcbc; box-shadow: 0 1px 0 #dedede; }
.size .i32 { margin: 0 8px 0 9px; }
.toggle { width: 48px; height: 22px; border-radius: 5px; background: #c2c2c2; }
.toggle svg { display: block; width: 38px; height: 16px; margin: auto; }
.end { margin-left: auto; }
.angle { justify-content: flex-end; gap: 2px; }
.angle .i32 { height: 20px; }
.angle input { width: 99px; }

/* Workspace */
.workspace { flex: 1; min-height: 0; display: flex; }
.toolbox { flex: none; width: 102px; background: #ebebeb; border-right: 1px solid #e2e2e2; }
.palette { background: #f3f3f3; }
.drag { display: block; width: 39px; height: 9px; margin-left: 30px; background: linear-gradient(#c8c8c8, #c8c8c8) 0 5px / 39px 1px no-repeat; }
.tools { display: grid; grid-template-columns: 46px 56px; grid-auto-rows: 32px; }
.tools button { display: grid; place-items: center; }
.tools svg { width: 32px; height: 32px; }
.pair-top .on { height: 28px; border-radius: 5px; background: #c2c2c2; }
.pair-top button { height: 28px; }
.palette h3, .navigator h3 {
  height: 24px;
  padding-left: 5px;
  display: flex;
  align-items: center;
  gap: 9px;
  background: #d7d7d7;
  font-size: 12px;
  font-weight: 500;
}
.palette h3 { margin-top: 1px; }
.palette .pair-top + h3 { margin-top: 0; }
.palette h3::before, .navigator h3::before { content: ""; border: 5px solid transparent; border-top: 8px solid #8c8c8c; border-bottom: 0; }

.center { flex: 1; min-width: 0; display: flex; flex-direction: column; }
.tabs { flex: none; height: 25px; display: flex; background: #e2e2e2; }
.tabs button { display: flex; align-items: center; justify-content: center; gap: 2px; }
.tabs .all { width: 38px; background: #ebebeb; }
.all svg { width: 24px; height: 18px; }
.tabs .tab { width: 343px; border-right: 1px solid #b9b9b9; color: #444; font-size: 13px; white-space: nowrap; }
.tab svg { width: 20px; height: 18px; }
.tabs .current { background: #fff; border-color: #fff; }
.tabs .views { width: 56px; margin-left: auto; gap: 5px; background: #f4f4f4; }
.views svg:first-child { width: 26px; height: 20px; }
.canvas { position: relative; flex: 1; min-height: 0; overflow: hidden; background: #fefefe; }
.drawing { display: block; width: 100%; height: 100%; }
.board { stroke: #c3c3c3; stroke-width: 2; }
.ink { stroke: #333; stroke-width: 1.3; }
.soft { stroke: #666; }
.wall { fill: #6c6c6c; stroke: #222; stroke-width: 1; }
.blueline { stroke: #4179c4; stroke-width: 2; }
.armchair { fill: #e1fde2; stroke: #43a283; stroke-width: 2; }
.handle { fill: #7d1f86; stroke: none; }
.dot { fill: #000; stroke: none; }

.watermark {
  position: absolute;
  left: 690px;
  top: 355px;
  display: flex;
  align-items: center;
  gap: 14px;
  color: #fff;
  font: 400 39px/42px "Noto Sans CJK SC", sans-serif;
  text-shadow: 0 0 4px #888, 0 1px 3px #aaa;
}
.badge {
  width: 34px;
  height: 34px;
  border-radius: 50%;
  background: #f7f7f7;
  box-shadow: 0 0 4px #ccc;
  color: #f5491c;
  font: italic 900 24px/34px Inter, sans-serif;
  text-align: center;
  text-shadow: none;
}
.keys { position: absolute; left: 889px; top: 713px; display: flex; gap: 12px; }
kbd {
  width: 359px;
  height: 106px;
  border-radius: 6px;
  background: #bccff7;
  box-shadow: 0 0 0 3px #fcfbff;
  color: #fff;
  font: 700 72px/102px "Noto Sans CJK SC", sans-serif;
  text-align: center;
}
kbd.single { width: 123px; }

/* Navigator */
.navigator { flex: none; width: 84px; padding-left: 2px; display: flex; flex-direction: column; overflow: hidden; border-left: 1px solid #e0e0e0; white-space: nowrap; }
.modes { flex: none; height: 40px; margin-top: 12px; padding: 0 0 6px 6px; display: flex; align-items: center; gap: 12px; }
.modes button { flex: none; height: 30px; }
.modes svg { display: block; width: 24px; height: 30px; }
.modes .on { width: 40px; padding-left: 4px; border-radius: 5px; background: #c2c2c2; }
.modes .sep { flex: none; margin-right: -5px; }
.search { flex: none; height: 22px; margin-left: 2px; padding-left: 6px; display: flex; align-items: center; gap: 8px; background: #fff; box-shadow: 0 1px 1px #cbcbcb; }
.search svg { width: 16px; height: 16px; }
.search input { flex: 1; padding: 0; background: none; }
.search input::placeholder { color: #b5b5b5; opacity: 1; }
.tree { flex: none; height: 764px; padding-bottom: 134px; margin-top: 5px; display: grid; grid-auto-rows: 1fr; list-style: none; background: #fefefe; font-weight: 500; }
.tree li { display: flex; align-items: center; justify-content: flex-start; gap: 5px; padding-left: 20px; }
.tree li svg { width: 20px; height: 18px; }
.tree li .chev { width: 12px; height: 12px; margin: 0 2px 0 -19px; stroke: #777; }
.tree .l1 { padding-left: 36px; }
.tree .l2 { padding-left: 52px; }
.tree .l3 { padding-left: 68px; }
.tree .picked { background: #dadada; }
.tree b { font-weight: 600; }
.actions { flex: none; height: 38px; padding: 0 0 0 6px; display: flex; align-items: center; gap: 8px; }
.actions button { flex: none; }
.actions svg { display: block; width: 26px; height: 24px; }
.navigator h3 { flex: none; margin-left: 2px; }
.prop { flex: none; height: 25px; padding-left: 2px; display: flex; align-items: center; gap: 6px; }
.prop svg { width: 16px; height: 14px; }
.prop input { flex: 1; height: 18px; background: #fff; box-shadow: 0 1px 0 #cbcbcb; }
```
